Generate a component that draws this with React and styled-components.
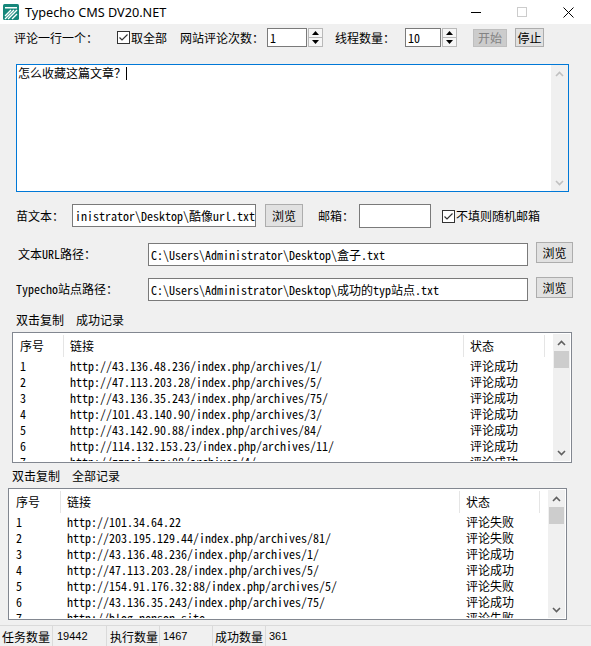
import React from "react"
import styled, { createGlobalStyle } from "styled-components"

const ui = `"Noto Sans CJK SC", "Microsoft YaHei", sans-serif`
const sim = `"Noto Sans Mono CJK SC", "Noto Sans CJK SC", monospace`

const GlobalStyle = createGlobalStyle`
  html, body {
    margin: 0;
    padding: 0;
    background: #f0f0f0;
  }
  body {
    font-family: ${ui};
    font-size: 12px;
    color: #000;
  }
`

const Window = styled.div`
  width: 591px;
  height: 646px;
  overflow: hidden;
  display: flex;
  flex-direction: column;
  background: #f0f0f0;
`

const TitleBar = styled.div`
  height: 24px;
  flex-shrink: 0;
  background: #fff;
  display: flex;
  align-items: center;
`

const AppIcon = styled.svg`
  margin-left: 3px;
  flex-shrink: 0;
`

const TitleText = styled.span`
  margin-left: 6px;
  font-family: "Noto Sans", "Open Sans", sans-serif;
  font-size: 12.7px;
  line-height: 24px;
  flex: 1;
`

const CtrlButton = styled.div`
  width: 46px;
  height: 24px;
  display: flex;
  align-items: center;
  justify-content: center;
`

const Row = styled.div`
  display: flex;
  align-items: ${({ $align }) => $align || "center"};
  height: ${({ $h }) => $h}px;
  margin-top: ${({ $mt }) => $mt || 0}px;
  padding-left: ${({ $pl }) => $pl || 0}px;
  flex-shrink: 0;
`

const Label = styled.span`
  font-family: ${({ $sim }) => ($sim ? sim : ui)};
  font-size: 12px;
  line-height: 16px;
  white-space: nowrap;
  flex-shrink: 0;
  width: ${({ $w }) => ($w ? `${$w}px` : "auto")};
  margin-left: ${({ $ml }) => $ml || 0}px;
`

const TextBox = styled.div`
  box-sizing: border-box;
  flex-shrink: 0;
  width: ${({ $w }) => $w}px;
  height: ${({ $h }) => $h}px;
  margin-left: ${({ $ml }) => $ml || 0}px;
  align-self: ${({ $top }) => ($top !== undefined ? "flex-start" : "auto")};
  margin-top: ${({ $top }) => $top || 0}px;
  border: 1px solid #7a7a7a;
  background: #fff;
  padding-left: 2px;
  font-family: ${sim};
  font-size: 12px;
  line-height: ${({ $h }) => $h - 2}px;
  white-space: nowrap;
  overflow: hidden;
`

const Button = styled.div`
  box-sizing: border-box;
  flex-shrink: 0;
  width: ${({ $w }) => $w}px;
  height: ${({ $h }) => $h}px;
  margin-left: ${({ $ml }) => $ml || 0}px;
  align-self: ${({ $top }) => ($top !== undefined ? "flex-start" : "auto")};
  margin-top: ${({ $top }) => $top || 0}px;
  border: 1px solid ${({ $disabled }) => ($disabled ? "#bfbfbf" : "#adadad")};
  background: ${({ $disabled }) => ($disabled ? "#cccccc" : "#e1e1e1")};
  color: ${({ $disabled }) => ($disabled ? "#838383" : "#000")};
  display: flex;
  align-items: center;
  justify-content: center;
  font-family: ${ui};
  font-size: 12px;
  line-height: 14px;
`

const CheckWrap = styled.label`
  display: flex;
  align-items: center;
  flex-shrink: 0;
  margin-left: ${({ $ml }) => $ml || 0}px;
  font-family: ${ui};
  font-size: 12px;
  line-height: 16px;
  white-space: nowrap;
  gap: 1px;
`

const Spin = styled.div`
  box-sizing: border-box;
  flex-shrink: 0;
  width: 15px;
  height: 19px;
  margin-left: 1px;
  border: 1px solid #b9b9b9;
  background: #f6f6f6;
  display: flex;
  flex-direction: column;
`

const SpinHalf = styled.div`
  flex: 1;
  display: flex;
  align-items: center;
  justify-content: center;
  border-top: ${({ $bottom }) => ($bottom ? "1px solid #b9b9b9" : "none")};
`

const Memo = styled.div`
  box-sizing: border-box;
  flex-shrink: 0;
  width: 553px;
  height: 128px;
  margin: 17px 0 0 16px;
  border: 1px solid #0078d7;
  background: #fff;
  display: flex;
`

const MemoText = styled.div`
  flex: 1;
  padding: 1px 0 0 1px;
  font-family: ${sim};
  font-size: 12px;
  line-height: 14px;
  display: flex;
  align-items: flex-start;
`

const Caret = styled.span`
  display: inline-block;
  width: 1px;
  height: 13px;
  margin-top: 1px;
  background: #000;
`

const ScrollBar = styled.div`
  width: 17px;
  flex-shrink: 0;
  background: #f0f0f0;
  display: flex;
  flex-direction: column;
`

const ScrollArrow = styled.div`
  height: 17px;
  flex-shrink: 0;
  display: flex;
  align-items: center;
  justify-content: center;
`

const Thumb = styled.div`
  height: 17px;
  margin: 0 1px;
  flex-shrink: 0;
  background: #cdcdcd;
`

const Track = styled.div`
  flex: 1;
`

const SectionTitle = styled.div`
  flex-shrink: 0;
  display: flex;
  gap: 12px;
  height: 16px;
  line-height: 16px;
  margin-top: ${({ $mt }) => $mt}px;
  padding-left: ${({ $pl }) => $pl}px;
  font-family: ${ui};
  font-size: 12px;
`

const List = styled.div`
  box-sizing: border-box;
  flex-shrink: 0;
  width: ${({ $w }) => $w}px;
  height: ${({ $h }) => $h}px;
  margin: ${({ $mt }) => $mt}px 0 0 ${({ $ml }) => $ml}px;
  border: 1px solid #828790;
  padding: 1px;
  background: #fff;
  display: flex;
  overflow: hidden;
`

const ListBody = styled.div`
  flex: 1;
  overflow: hidden;
  display: flex;
  flex-direction: column;
`

const ListRow = styled.div`
  display: flex;
  flex-shrink: 0;
  height: ${({ $h }) => $h}px;
  line-height: ${({ $h }) => $h}px;
`

const HeadCell = styled.div`
  box-sizing: border-box;
  flex-shrink: 0;
  width: ${({ $w }) => $w}px;
  padding-left: 6px;
  border-right: 1px solid #e5e5e5;
  font-family: ${ui};
  font-size: 12px;
  margin-top: 1px;
  margin-bottom: 1px;
  line-height: 22px;
`

const Cell = styled.div`
  box-sizing: border-box;
  flex-shrink: 0;
  width: ${({ $w }) => $w}px;
  padding-left: 6px;
  font-family: ${sim};
  font-size: 12px;
  white-space: nowrap;
  overflow: hidden;
`

const StatusBar = styled.div`
  flex-shrink: 0;
  height: 21px;
  margin-top: 5px;
  box-sizing: border-box;
  border-top: 1px solid #dadada;
  display: flex;
  align-items: stretch;
`

const StatusCell = styled.div`
  box-sizing: border-box;
  width: ${({ $w }) => ($w ? `${$w}px` : "auto")};
  flex: ${({ $w }) => ($w ? "none" : 1)};
  padding-left: ${({ $pl }) => $pl}px;
  border-right: ${({ $last }) => ($last ? "none" : "1px solid #dadada")};
  display: flex;
  align-items: center;
  font-family: ${({ $num }) => ($num ? `"Liberation Sans", Arial, sans-serif` : ui)};
  font-size: ${({ $num }) => ($num ? 11 : 12)}px;
`

const Chevron = ({ up, color }) => (
  <svg width="9" height="6" viewBox="0 0 9 6">
    <polyline
      points={up ? "1,5 4.5,1.5 8,5" : "1,1 4.5,4.5 8,1"}
      fill="none"
      stroke={color}
      strokeWidth="1.6"
    />
  </svg>
)

const Triangle = ({ up }) => (
  <svg width="7" height="4" viewBox="0 0 7 4">
    <polygon points={up ? "0,4 3.5,0 7,4" : "0,0 3.5,4 7,0"} fill="#000" />
  </svg>
)

const CheckBox = () => (
  <svg width="13" height="13" viewBox="0 0 13 13">
    <rect x="0.5" y="0.5" width="12" height="12" fill="#fff" stroke="#333" />
    <polyline points="2.5,6.5 5,9 10.5,3.5" fill="none" stroke="#333" strokeWidth="1.2" />
  </svg>
)

const Spinner = () => (
  <Spin>
    <SpinHalf>
      <Triangle up />
    </SpinHalf>
    <SpinHalf $bottom>
      <Triangle />
    </SpinHalf>
  </Spin>
)

const VScroll = ({ thumb, disabled }) => {
  const color = disabled ? "#c0c0c0" : "#606060"
  return (
    <ScrollBar>
      <ScrollArrow>
        <Chevron up color={color} />
      </ScrollArrow>
      {thumb && <Thumb />}
      <Track />
      <ScrollArrow>
        <Chevron color={color} />
      </ScrollArrow>
    </ScrollBar>
  )
}

const ListView = ({ w, h, mt, ml, cols, rows }) => (
  <List $w={w} $h={h} $mt={mt} $ml={ml}>
    <ListBody>
      <ListRow $h={24}>
        <HeadCell $w={cols[0]}>序号</HeadCell>
        <HeadCell $w={cols[1]}>链接</HeadCell>
        <HeadCell $w={cols[2]}>状态</HeadCell>
      </ListRow>
      {rows.map(([n, url, state]) => (
        <ListRow $h={16} key={n}>
          <Cell $w={cols[0]}>{n}</Cell>
          <Cell $w={cols[1]}>{url}</Cell>
          <Cell $w={cols[2]}>{state}</Cell>
        </ListRow>
      ))}
    </ListBody>
    <VScroll thumb />
  </List>
)

const okRows = [
  ["1", "http://43.136.48.236/index.php/archives/1/", "评论成功"],
  ["2", "http://47.113.203.28/index.php/archives/5/", "评论成功"],
  ["3", "http://43.136.35.243/index.php/archives/75/", "评论成功"],
  ["4", "http://101.43.140.90/index.php/archives/3/", "评论成功"],
  ["5", "http://43.142.90.88/index.php/archives/84/", "评论成功"],
  ["6", "http://114.132.153.23/index.php/archives/11/", "评论成功"],
  ["7", "http://zzpei.top:88/archives/4/", "评论成功"],
]

const allRows = [
  ["1", "http://101.34.64.22", "评论失败"],
  ["2", "http://203.195.129.44/index.php/archives/81/", "评论失败"],
  ["3", "http://43.136.48.236/index.php/archives/1/", "评论成功"],
  ["4", "http://47.113.203.28/index.php/archives/5/", "评论成功"],
  ["5", "http://154.91.176.32:88/index.php/archives/5/", "评论失败"],
  ["6", "http://43.136.35.243/index.php/archives/75/", "评论成功"],
  ["7", "http://blog.nenson.site", "评论失败"],
]

export default function App() {
  return (
    <Window>
      <GlobalStyle />
      <TitleBar>
        <AppIcon width="16" height="16" viewBox="0 0 16 16">
          <rect x="0" y="0" width="16" height="16" rx="1.5" fill="#17877b" />
          <rect x="2" y="3" width="12" height="1.5" fill="#fff" />
          <path d="M2 12 L8 6 M2 15 L11 6 M5 15 L14 6 M9 15 L14 10" stroke="#fff" strokeWidth="1.4" />
        </AppIcon>
        <TitleText>Typecho CMS DV20.NET</TitleText>
        <CtrlButton>
          <svg width="10" height="10" viewBox="0 0 10 10">
            <rect x="0" y="5" width="10" height="1" fill="#000" />
          </svg>
        </CtrlButton>
        <CtrlButton>
          <svg width="10" height="10" viewBox="0 0 10 10">
            <rect x="0.5" y="0.5" width="9" height="9" fill="none" stroke="#cccccc" />
          </svg>
        </CtrlButton>
        <CtrlButton>
          <svg width="11" height="11" viewBox="0 0 11 11">
            <path d="M0.5 0.5 L10.5 10.5 M10.5 0.5 L0.5 10.5" stroke="#000" strokeWidth="1" />
          </svg>
        </CtrlButton>
      </TitleBar>

      <Row $h={19} $mt={4} $pl={14}>
        <Label $w={84}>评论一行一个：</Label>
        <CheckWrap $ml={19}>
          <CheckBox />
          取全部
        </CheckWrap>
        <Label $w={87} $ml={13}>网站评论次数：</Label>
        <TextBox $w={40} $h={19}>1</TextBox>
        <Spinner />
        <Label $w={70} $ml={12}>线程数量：</Label>
        <TextBox $w={36} $h={19}>10</TextBox>
        <Spinner />
        <Button $w={34} $h={18} $ml={16} $disabled>开始</Button>
        <Button $w={29} $h={19} $ml={8}>停止</Button>
      </Row>

      <Memo>
        <MemoText>
          怎么收藏这篇文章？
          <Caret />
        </MemoText>
        <VScroll disabled />
      </Memo>

      <Row $h={24} $mt={12} $pl={16}>
        <Label $w={56}>苗文本：</Label>
        <TextBox $w={184} $h={23} $top={0}>inistrator\Desktop\酷像url.txt</TextBox>
        <Button $w={38} $h={23} $ml={9} $top={0}>浏览</Button>
        <Label $w={41} $ml={15}>邮箱：</Label>
        <TextBox $w={72} $h={24} />
        <CheckWrap $ml={11}>
          <CheckBox />
          不填则随机邮箱
        </CheckWrap>
      </Row>

      <Row $h={24} $mt={14} $pl={18}>
        <Label $w={130} $sim>文本URL路径：</Label>
        <TextBox $w={380} $h={23} $top={1}>C:\Users\Administrator\Desktop\盒子.txt</TextBox>
        <Button $w={37} $h={21} $ml={8} $top={0}>浏览</Button>
      </Row>

      <Row $h={24} $mt={11} $pl={16}>
        <Label $w={132} $sim>Typecho站点路径：</Label>
        <TextBox $w={380} $h={23} $top={1}>C:\Users\Administrator\Desktop\成功的typ站点.txt</TextBox>
        <Button $w={37} $h={21} $ml={8} $top={0}>浏览</Button>
      </Row>

      <SectionTitle $mt={11} $pl={16}>
        <span>双击复制</span>
        <span>成功记录</span>
      </SectionTitle>
      <ListView w={560} h={131} mt={4} ml={12} cols={[50, 400, 81]} rows={okRows} />

      <SectionTitle $mt={5} $pl={12}>
        <span>双击复制</span>
        <span>全部记录</span>
      </SectionTitle>
      <ListView w={559} h={132} mt={4} ml={8} cols={[51, 399, 80]} rows={allRows} />

      <StatusBar>
        <StatusCell $w={53} $pl={2}>任务数量</StatusCell>
        <StatusCell $w={54} $pl={4} $num>19442</StatusCell>
        <StatusCell $w={53} $pl={3}>执行数量</StatusCell>
        <StatusCell $w={53} $pl={3} $num>1467</StatusCell>
        <StatusCell $w={53} $pl={2}>成功数量</StatusCell>
        <StatusCell $pl={3} $num $last>361</StatusCell>
      </StatusBar>
    </Window>
  )
}
